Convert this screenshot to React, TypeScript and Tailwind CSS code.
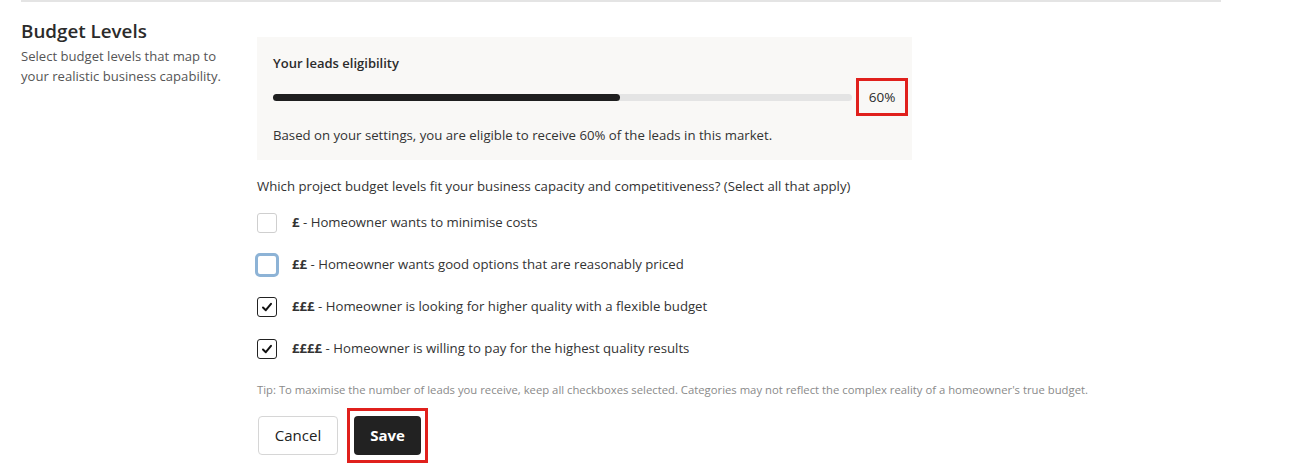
import React, { useState } from 'react';

const options = [
  { id: 'l1', sign: '£', label: 'Homeowner wants to minimise costs', checked: false },
  { id: 'l2', sign: '££', label: 'Homeowner wants good options that are reasonably priced', checked: false, focus: true },
  { id: 'l3', sign: '£££', label: 'Homeowner is looking for higher quality with a flexible budget', checked: true },
  { id: 'l4', sign: '££££', label: 'Homeowner is willing to pay for the highest quality results', checked: true },
];

const Check: React.FC<{ checked: boolean; focus?: boolean }> = ({ checked, focus }) => {
  if (focus) {
    return <div className="w-[24px] h-[24px] -ml-[2px] -mr-[2px] rounded-[5px] border-[3px] border-[#8db3d6] bg-white" />;
  }
  return (
    <div
      className={
        'w-[20px] h-[20px] rounded-[3px] flex items-center justify-center bg-white ' +
        (checked ? 'border-[1.5px] border-[#222]' : 'border border-[#cfcfcf]')
      }
    >
      {checked && (
        <svg width="12" height="12" viewBox="0 0 12 12" fill="none">
          <path d="M2 6.5 L4.8 9.2 L10 2.8" stroke="#111" strokeWidth="2" strokeLinecap="round" strokeLinejoin="round" />
        </svg>
      )}
    </div>
  );
};

export default function App() {
  const [items] = useState(options);
  const pct = 60;

  return (
    <div className="w-[1290px] h-[468px] bg-white text-[#2b2b2b] overflow-hidden" style={{ fontFamily: '"Open Sans", "Noto Sans", sans-serif' }}>
      <div className="ml-[21px] w-[1200px] h-[2px] bg-[#e4e4e4]" />
      <div className="flex pl-[21px] pt-[17px]">
        {/* left description */}
        <div className="w-[236px] shrink-0">
          <h2 className="text-[18.8px] leading-[24px] font-semibold text-[#2b2b2b]">Budget Levels</h2>
          <p className="mt-[3px] text-[13.1px] leading-[20px] text-[#555]">
            Select budget levels that map to
            <br />
            your realistic business capability.
          </p>
        </div>

        {/* main column */}
        <div className="w-[655px] pt-[18px]">
          <div className="bg-[#f9f8f6] pl-[16px] pr-[4px] pt-[17px] pb-[16px]">
            <div className="text-[13px] leading-[18px] font-semibold text-[#2b2b2b]">Your leads eligibility</div>
            <div className="flex items-center mt-[6px]">
              <div className="w-[579px] h-[7px] rounded-full bg-[#e4e4e4] shrink-0">
                <div className="h-full rounded-full bg-[#1f1f1f]" style={{ width: `${pct}%` }} />
              </div>
              <div className="ml-[4px] w-[52px] h-[38px] border-[3px] border-[#e0201c] flex items-center justify-center text-[13.5px] font-medium">
                {pct}%
              </div>
            </div>
            <p className="mt-[10px] text-[13.2px] leading-[18px] text-[#333]">
              Based on your settings, you are eligible to receive 60% of the leads in this market.
            </p>
          </div>

          <p className="mt-[17px] text-[13.2px] leading-[18px] text-[#333]">
            Which project budget levels fit your business capacity and competitiveness? (Select all that apply)
          </p>

          <div className="mt-[18px] flex flex-col gap-[22px]">
            {items.map((o) => (
              <label key={o.id} className="flex items-center h-[20px]">
                <Check checked={o.checked} focus={o.focus} />
                <span className="ml-[15px] text-[13.2px] text-[#333]">
                  <span className="font-bold">{o.sign}</span> - {o.label}
                </span>
              </label>
            ))}
          </div>

          <p className="mt-[24px] text-[11.3px] leading-[14px] text-[#8a8a8a] whitespace-nowrap">
            Tip: To maximise the number of leads you receive, keep all checkboxes selected. Categories may not reflect the complex reality of a homeowner's true budget.
          </p>

          <div className="mt-[11px] flex items-center">
            <button className="ml-[1px] w-[80px] h-[39px] rounded-[4px] border border-[#d6d6d6] bg-white text-[15px] font-medium text-[#222]">
              Cancel
            </button>
            <div className="ml-[9px] border-[3px] border-[#e0201c] px-[4px] py-[5px]">
              <button className="block w-[67px] h-[39px] rounded-[4px] bg-[#222] text-white text-[15px] font-bold">Save</button>
            </div>
          </div>
        </div>
      </div>
    </div>
  );
}
